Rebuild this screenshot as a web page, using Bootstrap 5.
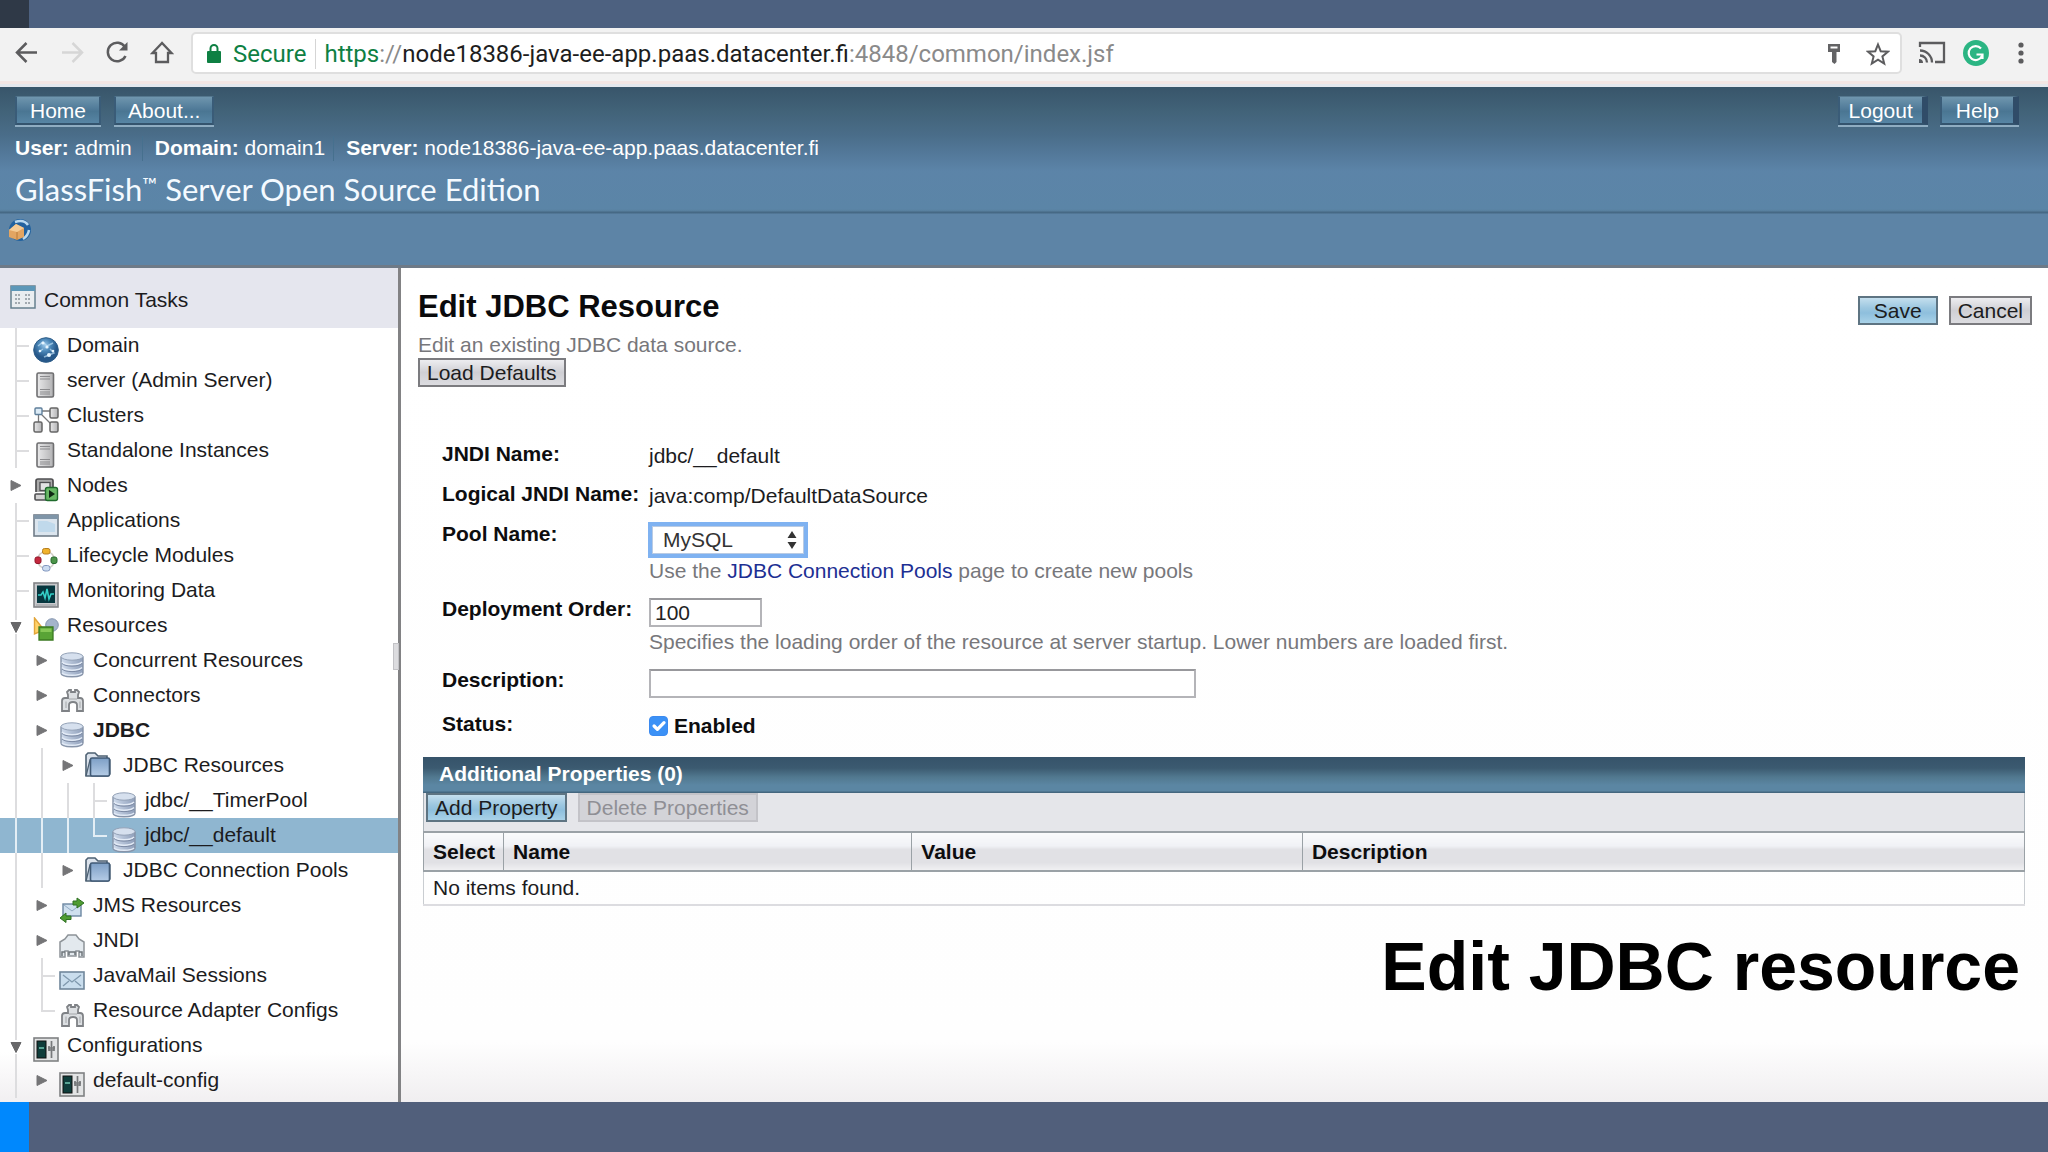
<!DOCTYPE html>
<html lang="en">
<head>
<meta charset="utf-8">
<meta name="viewport" content="width=device-width, initial-scale=1">
<title>Edit JDBC Resource</title>
<link href="https://cdn.jsdelivr.net/npm/bootstrap@5.3.0/dist/css/bootstrap.min.css" rel="stylesheet">
<style>
body{font-family:"Liberation Sans",Arial,sans-serif;font-size:21px;line-height:24px;color:#1c1c1e;background:#fff}
a{color:inherit;text-decoration:none}
svg{display:block;flex:none}
.strip-top{height:28px;background:#4d6180}
.strip-top span{width:29px;background:#2f3947}
.strip-bottom{height:50px;background:#515f7b}
.strip-bottom span{width:29px;background:#0088fd}
/* browser toolbar */
.chrome-bar{height:59px;padding:4px 22px 0 15px;background:#f2f2f2;border-bottom:3px solid #e4e8ee;box-shadow:inset 0 -3px #f3e6e4}
.nav-btn{width:24px;height:42px;padding:0;border:0;background:none;margin-right:21px}
.omnibox{height:42px;margin-left:-4px;padding:2px 10px 0 14px;background:#fff;border:2px solid #dfdfdf;border-radius:5px;font-family:Roboto,sans-serif;font-size:24px;color:#8a8a8a}
.omnibox b{font-weight:400;color:#1d1d1d}
.tls{color:#0e8043}
.omnibox .bar{width:1px;height:30px;background:#d5d5d5;margin:0 8px 0 9px}
/* masthead */
.masthead{height:181px;background:linear-gradient(#38556a 0,#426379 25px,#4a6d89 48px,#537899 66px,#5c84a8 84px,#5b85a7 122px,#587f9d 124px,#466985 125px,#466985 126px,#5d84a6 127px,#5d84a6 100%);border-bottom:3px solid #6e7a87;color:#fff}
.mast-top{padding:9px 29px 0 15px}
.mast-btn{height:29px;padding:1px 13px 0;font-size:21px;line-height:24px;color:#fff;border:2px solid #3a5c78;border-top:1px solid #55788f;border-bottom-color:#34546e;background:linear-gradient(#6f96ae,#517b99 45%,#4a7693 55%,#5785a4);box-shadow:0 2px #8fadc2;border-radius:0}
.mast-btn.home{margin-right:13px}
.mast-btn.about{padding:1px 12px 0}
.mast-btn.wide-edge{border-right:6px solid #304c68;padding:1px 9px 0}
.mast-btn.help{padding:1px 14px 0}
.who{padding:11px 15px 0;height:36px}
.who span+span{border-left:1px solid #46708e;padding-left:12px;margin-left:10px}
.who span:last-child{margin-left:8px}
.brand{font-family:Lato,"Open Sans",sans-serif;font-size:31px;line-height:36px;padding:10px 15px 0;font-weight:400;margin:0;height:53px;color:#f4faff}
.brand sup{font-size:20px;line-height:18px;top:-9px;vertical-align:baseline}
.update{padding:4px 6px}
/* tree */
.tree{width:401px;border-right:3px solid #828284;background:linear-gradient(#fff,#fff calc(100% - 50px),#f1eff1)}
.tasks{height:60px;background:#e5e6ee;padding:4px 10px 0}
.tasks svg{margin-top:-6px}
.leaf{height:35px;padding-left:3px;white-space:nowrap}
.leaf .cell{width:26px;height:35px;color:#dddddf;stroke:currentColor}
.leaf .ico{width:26px;height:26px;margin:9px 8px 0 4px}
.leaf .ico.fold{margin:4px 12px 0 4px}
.leaf a{line-height:34px}
.leaf.active{background:#8fb6d0}
.leaf.active .cell{color:#e3eef5}
.grip{right:-1px;top:375px;width:6px;height:27px;background:#dcdcdf;border:1px solid #c2c2c6}
/* content */
.pane{background:linear-gradient(#fff,#fefefe calc(100% - 60px),#f0eef0);padding:20px 16px 0 17px;color:#1c1c1e}
.pane h1{font-size:31px;line-height:38px;font-weight:700;margin:0;color:#0a0a0c}
.hint{color:#77777b}
.pane h1+.hint{padding:7px 0 1px}
.btn-gf{height:29px;padding:0 7px;font-size:21px;line-height:24px;color:#1c1c20;border:2px solid #7b7b7f;border-radius:0;background:linear-gradient(#ededf0,#cfcfd4 50%,#dcdce0);align-self:flex-start}
.btn-gf.primary{border-color:#5e7482;background:linear-gradient(#c4dfee,#9cc7e0 40%,#8ebfdd 60%,#a9d2e8)}
.btn-gf.save{padding:0 14px}
.btn-gf:disabled{color:#8f8f95;border-color:#c3c3c8;background:#d3d3d8;opacity:1}
.btn-row{gap:11px}
.props{padding:55px 0 0 24px}
.line{display:grid;grid-template-columns:207px 1fr;margin-bottom:14px}
.line .cap{font-weight:700;color:#0d0d0f;white-space:nowrap}
.line .val{padding-top:2px}
.pick select{display:block;appearance:none;width:152px;height:28px;border:1px solid #b9cbe4;background:#fff;border-radius:0;outline:4px solid #7fb2f1;outline-offset:0;padding:0 10px;font-size:21px;line-height:24px;color:#333;margin:4px 3px 5px}
.pick svg{right:10px;top:8px;pointer-events:none}
.pool-link{color:#1d2f93}
.box-in{display:block;height:29px;margin:1px 0 0;border:2px solid #b4b4b8;border-top-color:#98989c;padding:0 4px;font-size:21px;color:#222;background:#fff;border-radius:0}
.box-in+.hint{padding-top:3px}
.box-in.short{width:113px}
.box-in.long{width:100%;max-width:547px}
.form-check-input.tick{width:19px;height:20px;margin:0 6px 0 0;border-radius:4px;float:none;background-size:22px 22px;background-color:#3b91f6;border-color:#3b8af0}
.grid-wrap{margin:19px 7px 0 5px}
.grid-title{height:36px;padding:5px 16px;color:#fff;font-weight:700;background:linear-gradient(#36536a 0,#3b5a70 11px,#51788f 20px,#5b86a3 28px,#5b86a3 34px,#44677f 35px)}
.grid-tools{height:38px;background:#e5e6ea;border:1px solid #aab3ba;border-width:0 1px 0 1px;padding:0 2px}
.grid-data{border-collapse:collapse;width:100%;table-layout:fixed}
.grid-data th{height:39px;padding:0 9px;border:2px solid #9aa1a6;border-width:2px 1px 2px 1px;background:linear-gradient(#fafbfc,#f0f1f5 35%,#e1e1e5 45%,#e1e1e5 80%,#f0f0f2);color:#0d0d0f}
.grid-data td{height:34px;padding:0 9px;border:1px solid #c9cdd1;border-bottom-width:2px;border-bottom-color:#dcdce0}
.slide-title{font-size:68px;line-height:78px;font-weight:700;color:#000;padding:21px 12px 0 0;text-align:right}
</style>
</head>
<body class="d-flex flex-column min-vh-100">
<svg width="0" height="0" class="position-absolute" aria-hidden="true">
<defs>
<linearGradient id="gs" x1="0" x2="1"><stop offset="0" stop-color="#e9e9ea"/><stop offset="1" stop-color="#b2b2b4"/></linearGradient>
<linearGradient id="gb" x1="0" x2="1"><stop offset="0" stop-color="#cfdbec"/><stop offset="1" stop-color="#8f9fba"/></linearGradient>
<linearGradient id="gf" x1="0" y1="0" x2="0" y2="1"><stop offset="0" stop-color="#7d9fc6"/><stop offset="1" stop-color="#b5cce6"/></linearGradient>
<radialGradient id="gg" cx=".45" cy=".3"><stop offset="0" stop-color="#9cc8ea"/><stop offset=".5" stop-color="#4b87b8"/><stop offset="1" stop-color="#27588a"/></radialGradient>
<symbol id="v" viewBox="0 0 26 35"><path d="M13 0V35" stroke-width="2"/></symbol>
<symbol id="t" viewBox="0 0 26 35"><path d="M13 0V35M13 18H26" stroke-width="2"/></symbol>
<symbol id="l" viewBox="0 0 26 35"><path d="M13 0V18H26" fill="none" stroke-width="2"/></symbol>
<symbol id="r" viewBox="0 0 26 35"><path d="M8 12.500L18 17.500L8 22.500Z" fill="#757577" stroke="#757577" stroke-width="1"/></symbol>
<symbol id="d" viewBox="0 0 26 35"><path d="M13 0V12M13 26V35" stroke-width="2"/><path d="M8 14.500H18L13 24.500Z" fill="#68686a" stroke="#68686a" stroke-width="1"/></symbol>
<symbol id="globe" viewBox="0 0 26 26"><circle cx="13" cy="13" r="12.300" fill="url(#gg)" stroke="#2c5c88"/><path d="M5 9L10 5L14 9L20 6M10 12L6 15M17 12L21 16L16 18L11 20" stroke="#b9dcf2" stroke-width="1.500" fill="none" opacity=".7"/><g fill="#e6f5ff"><circle cx="10" cy="6" r="1.600"/><circle cx="14" cy="10" r="1.600"/><circle cx="16" cy="18" r="2"/><circle cx="7" cy="14" r="1.300"/><circle cx="20" cy="14" r="1.300"/></g></symbol>
<symbol id="server" viewBox="0 0 26 26"><rect x="4" y="1" width="16.500" height="24" rx="1.500" fill="url(#gs)" stroke="#6f6f71" stroke-width="1.600"/><path d="M7 4.500H17M7 7H17M7 17.500H17M7 20H17M7 22H17" stroke="#8a8a8d"/></symbol>
<symbol id="cluster" viewBox="0 0 26 26"><path d="M6 4H20M5.500 6V18M7 6L20 19" stroke="#78787a" stroke-width="1.300"/><rect x="2" y="1" width="7" height="6.500" rx="1" fill="#dcebf6" stroke="#5f7f9b" stroke-width="1.400"/><g fill="url(#gs)" stroke="#666" stroke-width="1.500"><rect x="17" y="1" width="8" height="10" rx="1.500"/><rect x="1" y="15" width="8" height="10" rx="1.500"/><rect x="17" y="15" width="8" height="10" rx="1.500"/></g></symbol>
<symbol id="node" viewBox="0 0 26 26"><path d="M3 15V4Q3 2 5 2H18Q20 2 20 4V15" fill="#aaa" stroke="#4f4f51" stroke-width="1.700"/><rect x="7" y="5.500" width="10" height="8" fill="#e3e3e3" stroke="#4f4f51" stroke-width="1.300"/><rect x="2" y="17" width="18" height="6" rx="1" fill="#d2d2d2" stroke="#4f4f51" stroke-width="1.600"/><rect x="12.500" y="10.500" width="12" height="13" rx="2" fill="#69b866" stroke="#1f6b2c" stroke-width="1.400"/><path d="M16 13L22 17L16 21Z" fill="#0f2914"/></symbol>
<symbol id="app" viewBox="0 0 26 26"><rect x="1" y="3" width="24" height="21" fill="#dbe5ee" stroke="#707c88" stroke-width="1.600"/><path d="M1 5H25" stroke="#7f95a8" stroke-width="4"/><path d="M5 9H14L22 12V20H5Z" fill="#c0d9eb"/></symbol>
<symbol id="life" viewBox="0 0 26 26"><circle cx="13" cy="13" r="8.500" fill="none" stroke="#d1cdc7" stroke-width="1.600"/><rect x="9.500" y="1.500" width="7.500" height="5.500" rx="2" fill="#f0b22c" stroke="#b77f1f"/><rect x="2" y="10" width="6" height="6.500" rx="2" fill="#c4283e" stroke="#92172b"/><rect x="18" y="10" width="6" height="6.500" rx="2" fill="#4c9449" stroke="#266a2e"/><rect x="9.500" y="18.500" width="7.500" height="5.500" rx="2.500" fill="#cbdcf1" stroke="#8297bf"/></symbol>
<symbol id="mon" viewBox="0 0 26 26"><rect x="1" y="1" width="24" height="24" fill="#c8cacd" stroke="#818386" stroke-width="1.600"/><rect x="4" y="3.500" width="18" height="17.500" fill="#06373f"/><path d="M5 13H8L10 10L12 16L14 7L16 17L18 12H21" fill="none" stroke="#34d0c8" stroke-width="1.600"/><path d="M3 23H23" stroke="#9c9ea1"/></symbol>
<symbol id="res" viewBox="0 0 26 26"><circle cx="19" cy="8" r="6.300" fill="#a4b4cb" stroke="#8596b0"/><path d="M1.500 1L11 13L1.500 17Z" fill="#ffd36a" stroke="#e2a53a" stroke-width="1.400"/><path d="M6 10H20V23H6Z" fill="#59a436" stroke="#3b7a22" stroke-width="1.300"/><path d="M7.500 11.500H18.500V15H7.500Z" fill="#86c856"/></symbol>
<symbol id="db" viewBox="0 0 26 26"><path d="M2 4.500V21C2 26 24 26 24 21V4.500" fill="url(#gb)" stroke="#8794a9" stroke-width="1.400"/><ellipse cx="13" cy="4.500" rx="11" ry="3.700" fill="#d6e0ee" stroke="#94a2b7"/><path d="M3 10C6 13.500 20 13.500 23 10M3 15.500C6 19 20 19 23 15.500M3 21C6 24 20 24 23 21" fill="none" stroke="#e3ebf6" stroke-width="1.500"/><path d="M3 11.500C6 15 20 15 23 11.500M3 17C6 20.500 20 20.500 23 17" fill="none" stroke="#7c8aa4"/></symbol>
<symbol id="plug" viewBox="0 0 26 26"><path d="M3 24V14Q3 11 6 11H9V8L8 5L10 3H12V5H16V3H18L20 5L19 8V11H21Q24 11 24 14V24H18V18Q18 15 14 15Q10 15 10 18V24Z" fill="#dcdfe2" stroke="#7f8286" stroke-width="1.800"/><path d="M7 21V14.500M21 21V14.500M10 12H18" fill="none" stroke="#a4a7aa"/></symbol>
<symbol id="folder" viewBox="0 0 26 26"><path d="M1 24V3L3 1H10L13 4H22V8" fill="#dce3ec" stroke="#4e6173" stroke-width="1.600"/><path d="M1 24L5 8H25V22L23 24Z" fill="#c8d5e4" stroke="#4e6173" stroke-width="1.300"/><rect x="5.500" y="6" width="19" height="18" rx="1.500" fill="url(#gf)" stroke="#405a76" stroke-width="1.600"/></symbol>
<symbol id="jms" viewBox="0 0 26 26"><rect x="4" y="7" width="18" height="12" fill="#cfe0ef" stroke="#6b86a1" stroke-width="1.400"/><path d="M5 8L13 14L21 8" fill="none" stroke="#93abc3"/><path d="M14 4H18V1L25 6L18 11V8H14Z" fill="#4f9c32" stroke="#2f7023"/><path d="M12 19H7V16L1 21L7 25.500V22.500H12Z" fill="#4f9c32" stroke="#2f7023"/></symbol>
<symbol id="jndi" viewBox="0 0 26 26"><path d="M1 25V10L6 7L9 3H17L20 7L25 10V25H20V19H17V24H9V19H6V25Z" fill="#e3e9ee" stroke="#8d9398" stroke-width="1.500"/><path d="M3 24V20H6M20 20H23V24M10 23V20H16V23" fill="none" stroke="#6e7479" stroke-width="1.500"/></symbol>
<symbol id="mail" viewBox="0 0 26 26"><rect x="1" y="5" width="24" height="17" fill="#c9dded" stroke="#71879b" stroke-width="1.600"/><path d="M4 8L13 15L22 8M4 19L10 14M22 19L16 14" fill="none" stroke="#7f98ad" stroke-width="1.300"/></symbol>
<symbol id="conf" viewBox="0 0 26 26"><rect x="1" y="1" width="24" height="23" fill="#e3e4e5" stroke="#7f8183" stroke-width="1.600"/><rect x="4" y="4" width="9" height="17" fill="#0f3d3b" stroke="#111"/><path d="M6 11H11" stroke="#72c7b3" stroke-width="1.500"/><path d="M18.500 4V21M15 11L22 11M16 13H21M16 9V14M21 9V14" stroke="#77797b" stroke-width="1.700"/></symbol>
</defs>
</svg>

<div class="strip-top d-flex"><span></span></div>

<div class="chrome-bar d-flex align-items-start" role="toolbar" aria-label="Browser">
  <button class="nav-btn" aria-label="Back"><svg width="24" height="42" fill="none" stroke="#5c5c5e" stroke-width="2.500"><path d="M22 20.500H2M11.500 11L2 20.500L11.500 30"/></svg></button>
  <button class="nav-btn" aria-label="Forward"><svg width="24" height="42" fill="none" stroke="#d6d6d6" stroke-width="2.500"><path d="M2 20.500H22M12.500 11L22 20.500L12.500 30"/></svg></button>
  <button class="nav-btn" aria-label="Reload"><svg width="24" height="42" fill="none" stroke="#5c5c5e" stroke-width="2.500"><path d="M20 15A9.300 9.300 0 1 0 20.500 24"/><path d="M22.500 10V18.500H14Z" fill="#5c5c5e" stroke="none"/></svg></button>
  <button class="nav-btn" aria-label="Home page"><svg width="24" height="42" fill="none" stroke="#5c5c5e" stroke-width="2.300"><path d="M12 11L2.500 21H6V30H18V21H21.500Z"/></svg></button>
  <div class="omnibox d-flex align-items-center flex-grow-1 text-nowrap">
    <svg width="14" height="22" class="me-2" fill="none"><path d="M3.500 9V5.500A3.500 3.500 0 0 1 10.500 5.500V9" stroke="#0e8043" stroke-width="2"/><rect x="0" y="8" width="14" height="12" rx="1" fill="#0e8043"/></svg>
    <span class="tls ms-1">Secure</span><span class="bar"></span>
    <span><span class="tls">https</span>://<b>node18386-java-ee-app.paas.datacenter.fi</b>:4848/common/index.jsf</span>
    <svg class="ms-auto" width="16" height="24"><path d="M2 2H14V10H10.500V20L8.500 22L6 20V10H2Z" fill="#636365"/><path d="M4.500 5.500H11.500" stroke="#fff" stroke-width="2"/></svg>
    <svg class="ms-4" width="24" height="24"><path d="M12 2.500L14.700 9.200L22 9.700L16.400 14.400L18.200 21.500L12 17.600L5.800 21.500L7.600 14.400L2 9.700L9.300 9.200Z" fill="none" stroke="#5c5c5e" stroke-width="2"/></svg>
  </div>
  <svg class="ms-3" width="28" height="42" fill="none" stroke="#5c5c5e" stroke-width="2.300"><path d="M2 15V11H26V30H17M2 18.500A12 12 0 0 1 14 30.500M2 23.500A7 7 0 0 1 9 30.500"/><path d="M1 27A4 4 0 0 1 5 31H1Z" fill="#5c5c5e" stroke="none"/></svg>
  <svg class="ms-3" width="28" height="42" fill="none"><circle cx="14" cy="21" r="13" fill="#2bb583"/><path d="M19 16.500A7 7 0 1 0 20 24M14.500 22.500H20.500V27" stroke="#fff" stroke-width="2.200"/></svg>
  <svg class="ms-4" width="12" height="42" fill="#5c5c5e"><circle cx="7" cy="13" r="2.600"/><circle cx="7" cy="21" r="2.600"/><circle cx="7" cy="29" r="2.600"/></svg>
</div>

<header class="masthead">
  <div class="mast-top d-flex">
    <button class="mast-btn home">Home</button>
    <button class="mast-btn about me-auto">About...</button>
    <button class="mast-btn wide-edge me-2">Logout</button>
    <button class="mast-btn wide-edge help ms-1">Help</button>
  </div>
  <div class="who d-flex"><span><b>User:</b> admin</span><span><b>Domain:</b> domain1</span><span><b>Server:</b> node18386-java-ee-app.paas.datacenter.fi</span></div>
  <p class="brand">GlassFish<sup>™</sup> Server Open Source Edition</p>
  <div class="update"><a href="#" aria-label="Updates"><svg width="26" height="24"><circle cx="14" cy="12" r="11" fill="#22629f"/><path d="M9 4Q18 1 22 7M23 12Q22 18 17 21" fill="none" stroke="#b8d8ef" stroke-width="2.500"/><path d="M3 12L10 6L18 10V19L11 22L3 19Z" fill="#e3a562"/><path d="M3 12L11 14L18 10L10 6Z" fill="#f5cc96"/><path d="M11 14V22" stroke="#b87a38"/></svg></a></div>
</header>

<div class="d-flex flex-grow-1">
  <nav class="tree flex-shrink-0 position-relative" aria-label="Tree">
    <div class="tasks d-flex align-items-center"><svg width="26" height="26" class="me-2"><rect x="1" y="2" width="24" height="22" fill="#e9edf0" stroke="#66808f" stroke-width="1.500"/><rect x="1" y="2" width="24" height="5" fill="#5c97b8"/><path d="M5 11H11M15 11H21M5 15H11M15 15H21M5 19H11M15 19H21" stroke="#a2aab0" stroke-width="2" stroke-dasharray="2 1"/></svg><a href="#">Common Tasks</a></div>
    <div class="leaf d-flex"><svg class="cell"><use href="#t"/></svg><svg class="ico"><use href="#globe"/></svg><a href="#">Domain</a></div>
    <div class="leaf d-flex"><svg class="cell"><use href="#t"/></svg><svg class="ico"><use href="#server"/></svg><a href="#">server (Admin Server)</a></div>
    <div class="leaf d-flex"><svg class="cell"><use href="#t"/></svg><svg class="ico"><use href="#cluster"/></svg><a href="#">Clusters</a></div>
    <div class="leaf d-flex"><svg class="cell"><use href="#t"/></svg><svg class="ico"><use href="#server"/></svg><a href="#">Standalone Instances</a></div>
    <div class="leaf d-flex"><svg class="cell"><use href="#r"/></svg><svg class="ico"><use href="#node"/></svg><a href="#">Nodes</a></div>
    <div class="leaf d-flex"><svg class="cell"><use href="#t"/></svg><svg class="ico"><use href="#app"/></svg><a href="#">Applications</a></div>
    <div class="leaf d-flex"><svg class="cell"><use href="#t"/></svg><svg class="ico"><use href="#life"/></svg><a href="#">Lifecycle Modules</a></div>
    <div class="leaf d-flex"><svg class="cell"><use href="#t"/></svg><svg class="ico"><use href="#mon"/></svg><a href="#">Monitoring Data</a></div>
    <div class="leaf d-flex"><svg class="cell"><use href="#d"/></svg><svg class="ico"><use href="#res"/></svg><a href="#">Resources</a></div>
    <div class="leaf d-flex"><svg class="cell"><use href="#v"/></svg><svg class="cell"><use href="#r"/></svg><svg class="ico"><use href="#db"/></svg><a href="#">Concurrent Resources</a></div>
    <div class="leaf d-flex"><svg class="cell"><use href="#v"/></svg><svg class="cell"><use href="#r"/></svg><svg class="ico"><use href="#plug"/></svg><a href="#">Connectors</a></div>
    <div class="leaf d-flex"><svg class="cell"><use href="#v"/></svg><svg class="cell"><use href="#r"/></svg><svg class="ico"><use href="#db"/></svg><a href="#" class="fw-bold">JDBC</a></div>
    <div class="leaf d-flex"><svg class="cell"><use href="#v"/></svg><svg class="cell"><use href="#v"/></svg><svg class="cell"><use href="#r"/></svg><svg class="ico fold"><use href="#folder"/></svg><a href="#">JDBC Resources</a></div>
    <div class="leaf d-flex"><svg class="cell"><use href="#v"/></svg><svg class="cell"><use href="#v"/></svg><svg class="cell"><use href="#v"/></svg><svg class="cell"><use href="#t"/></svg><svg class="ico me-1"><use href="#db"/></svg><a href="#" class="ps-1">jdbc/__TimerPool</a></div>
    <div class="leaf d-flex active"><svg class="cell"><use href="#v"/></svg><svg class="cell"><use href="#v"/></svg><svg class="cell"><use href="#v"/></svg><svg class="cell"><use href="#l"/></svg><svg class="ico me-1"><use href="#db"/></svg><a href="#" class="ps-1" aria-current="page">jdbc/__default</a></div>
    <div class="leaf d-flex"><svg class="cell"><use href="#v"/></svg><svg class="cell"><use href="#v"/></svg><svg class="cell"><use href="#r"/></svg><svg class="ico fold"><use href="#folder"/></svg><a href="#">JDBC Connection Pools</a></div>
    <div class="leaf d-flex"><svg class="cell"><use href="#v"/></svg><svg class="cell"><use href="#r"/></svg><svg class="ico"><use href="#jms"/></svg><a href="#">JMS Resources</a></div>
    <div class="leaf d-flex"><svg class="cell"><use href="#v"/></svg><svg class="cell"><use href="#r"/></svg><svg class="ico"><use href="#jndi"/></svg><a href="#">JNDI</a></div>
    <div class="leaf d-flex"><svg class="cell"><use href="#v"/></svg><svg class="cell"><use href="#t"/></svg><svg class="ico"><use href="#mail"/></svg><a href="#">JavaMail Sessions</a></div>
    <div class="leaf d-flex"><svg class="cell"><use href="#v"/></svg><svg class="cell"><use href="#l"/></svg><svg class="ico"><use href="#plug"/></svg><a href="#">Resource Adapter Configs</a></div>
    <div class="leaf d-flex"><svg class="cell"><use href="#d"/></svg><svg class="ico"><use href="#conf"/></svg><a href="#">Configurations</a></div>
    <div class="leaf d-flex"><svg class="cell"><use href="#v"/></svg><svg class="cell"><use href="#r"/></svg><svg class="ico"><use href="#conf"/></svg><a href="#">default-config</a></div>
    <span class="grip position-absolute"></span>
  </nav>

  <main class="pane flex-grow-1">
    <div class="d-flex justify-content-between">
      <div>
        <h1>Edit JDBC Resource</h1>
        <div class="hint">Edit an existing JDBC data source.</div>
        <button class="btn-gf d-block">Load Defaults</button>
      </div>
      <div class="d-flex btn-row pt-2"><button class="btn-gf primary save">Save</button><button class="btn-gf">Cancel</button></div>
    </div>

    <form class="props">
      <div class="line"><span class="cap">JNDI Name:</span><span class="val">jdbc/__default</span></div>
      <div class="line"><span class="cap">Logical JNDI Name:</span><span class="val">java:comp/DefaultDataSource</span></div>
      <div class="line"><label class="cap" for="pool">Pool Name:</label>
        <div><div class="d-flex"><div class="pick position-relative"><select id="pool"><option>MySQL</option></select><svg class="position-absolute" width="10" height="20" fill="#333"><path d="M5 1L9.500 8H.5ZM5 19L9.500 12H.5Z"/></svg></div></div>
        <div class="hint">Use the <a href="#" class="pool-link">JDBC Connection Pools</a> page to create new pools</div></div></div>
      <div class="line"><label class="cap" for="order">Deployment Order:</label>
        <div><input class="box-in short" id="order" type="text" value="100"><div class="hint">Specifies the loading order of the resource at server startup. Lower numbers are loaded first.</div></div></div>
      <div class="line"><label class="cap" for="desc">Description:</label><div><input class="box-in long" id="desc" type="text"></div></div>
      <div class="line"><span class="cap">Status:</span><div class="val d-flex align-items-center"><input class="form-check-input tick" id="on" type="checkbox" checked><label class="cap" for="on">Enabled</label></div></div>
    </form>

    <section class="grid-wrap">
      <div class="grid-title">Additional Properties (0)</div>
      <div class="grid-tools d-flex btn-row"><button class="btn-gf primary">Add Property</button><button class="btn-gf" disabled>Delete Properties</button></div>
      <table class="grid-data">
        <colgroup><col style="width:5%"><col style="width:25.500%"><col style="width:24.400%"><col></colgroup>
        <thead><tr><th>Select</th><th>Name</th><th>Value</th><th>Description</th></tr></thead>
        <tbody><tr><td colspan="4">No items found.</td></tr></tbody>
      </table>
    </section>
    <div class="slide-title">Edit JDBC resource</div>
  </main>
</div>

<div class="strip-bottom d-flex"><span></span></div>
<script src="https://cdn.jsdelivr.net/npm/bootstrap@5.3.0/dist/js/bootstrap.bundle.min.js"></script>
</body>
</html>
